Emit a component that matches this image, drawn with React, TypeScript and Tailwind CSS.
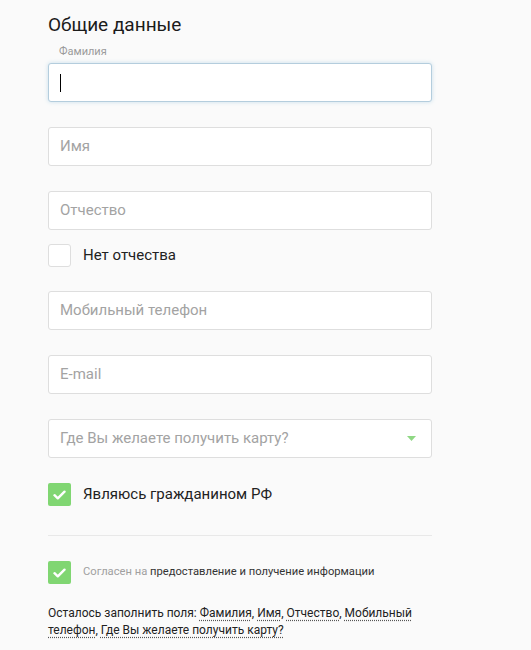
import { useState } from "react";

const Check = () => (
  <svg width="13" height="10" viewBox="0 0 13 10" fill="none">
    <path d="M1.5 5.2 L4.8 8.3 L11.5 1.7" stroke="#fff" strokeWidth="2.4" strokeLinecap="round" strokeLinejoin="round" />
  </svg>
);

function Field({ placeholder }: { placeholder: string }) {
  return (
    <div className="flex h-[39px] items-center rounded-[3px] border border-[#dedede] bg-white px-[11px] text-[15px] text-[#a3a3a3]">
      {placeholder}
    </div>
  );
}

function Box({ checked }: { checked?: boolean }) {
  return checked ? (
    <span className="flex h-[23px] w-[23px] shrink-0 items-center justify-center rounded-[2px] bg-[#80d672]">
      <Check />
    </span>
  ) : (
    <span className="h-[23px] w-[23px] shrink-0 rounded-[3px] border border-[#dedede] bg-white" />
  );
}

const missing = ["Фамилия", "Имя", "Отчество", "Мобильный телефон", "Где Вы желаете получить карту?"];

export default function App() {
  const [noPatronymic] = useState(false);

  return (
    <div className="min-h-[650px] bg-[#fafafa] pl-12 pt-[13px] font-['Roboto',sans-serif] text-[#222]">
      <div className="w-[384px]">
        <h1 className="text-[19px] leading-[24px] text-[#1b1b1b]">Общие данные</h1>
        <p className="mt-[8px] pl-[11px] text-[11px] leading-[13px] text-[#9b9b9b]">Фамилия</p>
        <div className="mt-[5px] flex h-[39px] items-center rounded-[3px] border border-[#b4cddd] bg-white px-[11px] shadow-[0_0_4px_rgba(140,190,220,0.45)]">
          <span className="h-[18px] w-px bg-black" />
        </div>

        <div className="mt-[25px]">
          <Field placeholder="Имя" />
        </div>
        <div className="mt-[25px]">
          <Field placeholder="Отчество" />
        </div>

        <label className="mt-[14px] flex items-center gap-[12px] text-[15px]">
          <Box checked={noPatronymic} />
          Нет отчества
        </label>

        <div className="mt-[24px]">
          <Field placeholder="Мобильный телефон" />
        </div>
        <div className="mt-[25px]">
          <Field placeholder="E-mail" />
        </div>
        <div className="mt-[25px] flex h-[39px] items-center justify-between rounded-[3px] border border-[#dedede] bg-white pl-[11px] pr-[15px] text-[15px] text-[#a3a3a3]">
          Где Вы желаете получить карту?
          <svg width="9" height="5" viewBox="0 0 9 5">
            <path d="M0 0 H9 L4.5 5 Z" fill="#8fd884" />
          </svg>
        </div>

        <label className="mt-[25px] flex items-center gap-[12px] text-[15px]">
          <Box checked />
          Являюсь гражданином РФ
        </label>

        <div className="mt-[29px] h-px bg-[#e8e8e8]" />

        <label className="mt-[25px] flex items-center gap-[12px] text-[11.2px]">
          <Box checked />
          <span className="text-[#a0a0a0]">
            Согласен на <span className="text-[#333]">предоставление и получение информации</span>
          </span>
        </label>

        <p className="mt-[21px] text-[12px] leading-[17px] text-[#222]">
          Осталось заполнить поля:{" "}
          {missing.map((m, i) => (
            <span key={m}>
              <span className="underline decoration-dotted decoration-[#555] underline-offset-[3px]">{m}</span>
              {i < missing.length - 1 ? ", " : ""}
            </span>
          ))}
        </p>
      </div>
    </div>
  );
}
